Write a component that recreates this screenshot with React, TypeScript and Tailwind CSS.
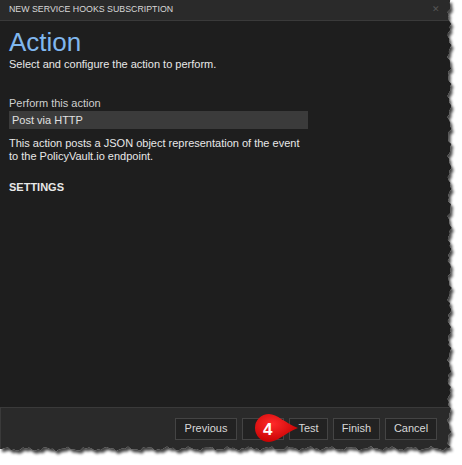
import React from "react";

const buttons = [
  { label: "Previous", w: "w-[62px]" },
  { label: "", w: "w-[42px]" },
  { label: "Test", w: "w-[39px]" },
  { label: "Finish", w: "w-[47px]" },
  { label: "Cancel", w: "w-[52px]" },
];

// torn paper edge along right and bottom
const noise = (t: number) =>
  Math.sin(t * 0.31) * 1.4 + Math.sin(t * 0.83 + 1.3) * 1.0 + Math.sin(t * 2.1 + 0.4) * 0.6;

const tornPath = () => {
  const pts: string[] = ["M0 0", "L450 0"];
  for (let y = 0; y <= 449; y += 3) pts.push(`L${(449 + noise(y)).toFixed(1)} ${y}`);
  for (let x = 449; x >= 0; x -= 3) pts.push(`L${x} ${(449 + noise(x + 50)).toFixed(1)}`);
  pts.push("L0 449 Z");
  return pts.join(" ");
};

const TornEdge = () => {
  const d = tornPath();
  return (
    <svg className="absolute left-0 top-0 pointer-events-none" width="462" height="465">
      <defs>
        <clipPath id="outside">
          <path clipRule="evenodd" d={`M0 0 H462 V465 H0 Z ${d}`} />
        </clipPath>
        <filter id="blur" x="-5%" y="-5%" width="110%" height="110%">
          <feGaussianBlur stdDeviation="1.6" />
        </filter>
      </defs>
      <g clipPath="url(#outside)">
        <rect width="462" height="465" fill="#fff" />
        <path d={d} transform="translate(2 3)" fill="#000" opacity="0.75" filter="url(#blur)" />
      </g>
    </svg>
  );
};

const App = () => {
  return (
    <div className="w-[462px] h-[465px] bg-white relative overflow-hidden font-['Liberation_Sans',sans-serif]">
      <div className="w-[456px] h-[456px] bg-[#1e1e1e] flex flex-col">
        <div className="h-[21px] bg-[#2a2a2a] border-b border-[#3a3a3a] flex items-center justify-between pl-[9px] pr-[16px]">
          <span className="text-[8.8px] text-[#d8d8d8]">NEW SERVICE HOOKS SUBSCRIPTION</span>
          <span className="text-[9px] text-[#555]">✕</span>
        </div>
        <div className="flex-1 px-[9px] pt-[6px] text-[#e8e8e8]">
          <h1 className="text-[26px] leading-[30px] text-[#80b7ee] font-light">Action</h1>
          <p className="text-[11px] leading-[13px] mt-[1px]">Select and configure the action to perform.</p>
          <label className="block text-[11px] leading-[13px] text-[#cfcfcf] mt-[26px]">Perform this action</label>
          <div className="w-[299px] h-[18px] bg-[#3b3b3b] mt-[1px] flex items-center px-[3px] text-[11px] text-[#e0e0e0]">
            Post via HTTP
          </div>
          <p className="text-[11px] leading-[13px] mt-[8px]">
            This action posts a JSON object representation of the event
            <br />
            to the PolicyVault.io endpoint.
          </p>
          <h3 className="text-[11px] leading-[13px] font-bold mt-[18px]">SETTINGS</h3>
        </div>
        <div className="h-[49px] pb-[7px] bg-[#2a2a2a] border-t border-l border-[#3a3a3a] flex items-center justify-end gap-[5px] pr-[19px]">
          {buttons.map((b, i) => (
            <button
              key={i}
              className={`${b.w} h-[22px] border border-[#444] bg-[#222] text-[11px] text-[#d8d8d8]`}
            >
              {b.label}
            </button>
          ))}
        </div>
      </div>
      <TornEdge />
      <svg className="absolute left-[254px] top-[413px]" width="46" height="30" viewBox="0 0 46 30">
        <defs>
          <radialGradient id="g" cx="40%" cy="35%" r="70%">
            <stop offset="0%" stopColor="#ff2a2a" />
            <stop offset="100%" stopColor="#c40000" />
          </radialGradient>
        </defs>
        <path d="M15 1 A14 14 0 1 0 15 29 C23 29 31 20 44 15 C31 10 23 1 15 1 Z" fill="url(#g)" />
      </svg>
      <span className="absolute left-[263px] top-[417px] text-[17px] font-bold text-white">4</span>
    </div>
  );
};

export default App;
